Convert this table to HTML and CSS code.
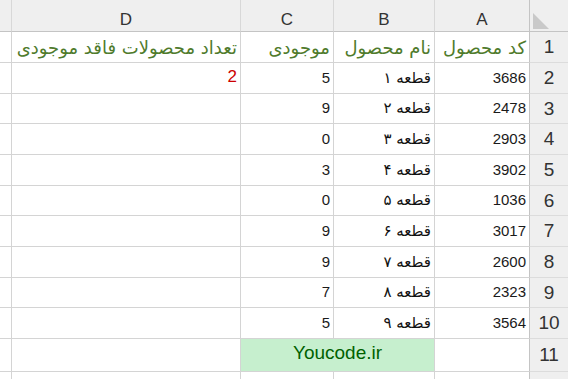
FILE: index.html
```html
<!DOCTYPE html>
<html lang="fa">
<head>
<meta charset="utf-8">
<link rel="stylesheet" href="styles.css">
</head>
<body>
<div class="sheet">
  <div class="ch"></div><div class="ch bl">D</div><div class="ch bl">C</div><div class="ch bl">B</div><div class="ch bl">A</div>
  <div class="corner"><span class="tri"></span></div>

  <div class="c"></div><div class="c bl hd">تعداد محصولات فاقد موجودی</div><div class="c bl hd">موجودی</div><div class="c bl hd">نام محصول</div><div class="c bl hd">کد محصول</div><div class="rh">1</div>
  <div class="c"></div><div class="c bl red">2</div><div class="c bl num">5</div><div class="c bl fa">قطعه ۱</div><div class="c bl num">3686</div><div class="rh">2</div>
  <div class="c"></div><div class="c bl"></div><div class="c bl num">9</div><div class="c bl fa">قطعه ۲</div><div class="c bl num">2478</div><div class="rh">3</div>
  <div class="c"></div><div class="c bl"></div><div class="c bl num">0</div><div class="c bl fa">قطعه ۳</div><div class="c bl num">2903</div><div class="rh">4</div>
  <div class="c"></div><div class="c bl"></div><div class="c bl num">3</div><div class="c bl fa">قطعه ۴</div><div class="c bl num">3902</div><div class="rh">5</div>
  <div class="c"></div><div class="c bl"></div><div class="c bl num">0</div><div class="c bl fa">قطعه ۵</div><div class="c bl num">1036</div><div class="rh">6</div>
  <div class="c"></div><div class="c bl"></div><div class="c bl num">9</div><div class="c bl fa">قطعه ۶</div><div class="c bl num">3017</div><div class="rh">7</div>
  <div class="c"></div><div class="c bl"></div><div class="c bl num">9</div><div class="c bl fa">قطعه ۷</div><div class="c bl num">2600</div><div class="rh">8</div>
  <div class="c"></div><div class="c bl"></div><div class="c bl num">7</div><div class="c bl fa">قطعه ۸</div><div class="c bl num">2323</div><div class="rh">9</div>
  <div class="c"></div><div class="c bl"></div><div class="c bl num">5</div><div class="c bl fa">قطعه ۹</div><div class="c bl num">3564</div><div class="rh">10</div>
  <div class="c"></div><div class="c bl"></div><div class="c bl green span2">Youcode.ir</div><div class="c bl"></div><div class="rh">11</div>
  <div class="c"></div><div class="c bl"></div><div class="c bl"></div><div class="c bl"></div><div class="c bl"></div><div class="rh">12</div>
</div>
</body>
</html>
```

FILE: styles.css
```css
html, body {
  margin: 0;
  padding: 0;
  background: #ffffff;
  overflow: hidden;
  width: 568px;
  height: 379px;
}
.sheet {
  display: grid;
  grid-template-columns: 11px 229px 93px 101px 95px 39px;
  grid-template-rows: 32px 31px 31px 30px 31px 31px 30px 31px 31px 30px 31px 33px 30px;
  font-family: "Liberation Sans", "DejaVu Sans", sans-serif;
  color: #222;
}
.ch {
  background: #efefef;
  border-bottom: 1px solid #c4c4c4;
  box-sizing: border-box;
  display: flex;
  align-items: center;
  justify-content: center;
  font-size: 17px;
  color: #333;
  padding-top: 8px;
}
.ch.bl { border-left: 1px solid #d8d8d8; }
.corner {
  background: #efefef;
  border-bottom: 1px solid #c4c4c4;
  border-left: 1px solid #c4c4c4;
  box-sizing: border-box;
  position: relative;
}
.tri {
  position: absolute;
  left: 3px;
  top: 13px;
  width: 0;
  height: 0;
  border-left: 16px solid #c9c9c9;
  border-top: 16px solid transparent;
}
.c {
  border-bottom: 1px solid #d4d4d4;
  box-sizing: border-box;
  display: flex;
  align-items: flex-end;
  justify-content: flex-start;
  direction: rtl;
  padding: 0 3px 5px 3px;
  white-space: nowrap;
  overflow: hidden;
}
.c.bl { border-left: 1px solid #d4d4d4; }
.hd {
  font-family: "DejaVu Sans", sans-serif;
  font-size: 18px;
  color: #4f7b2c;
  padding-bottom: 4px;
}
.num { font-size: 15px; color: #1a1a1a; padding-bottom: 7px; }
.fa { font-family: "DejaVu Sans", sans-serif; font-size: 15px; color: #111; padding-bottom: 6px; }
.red { font-size: 17px; color: #cc0000; padding-bottom: 6px; }
.span2 { grid-column: span 2; }
.green {
  background: #c6efce;
  color: #006100;
  font-size: 19px;
  justify-content: center;
  align-items: center;
  direction: ltr;
  padding: 0 0 4px 0;
  border-bottom: 1px solid #d4d4d4;
}
.rh {
  background: #efefef;
  border-left: 1px solid #c4c4c4;
  border-bottom: 1px solid #dcdcdc;
  box-sizing: border-box;
  display: flex;
  align-items: center;
  justify-content: center;
  font-size: 19px;
  color: #333;
}
```
